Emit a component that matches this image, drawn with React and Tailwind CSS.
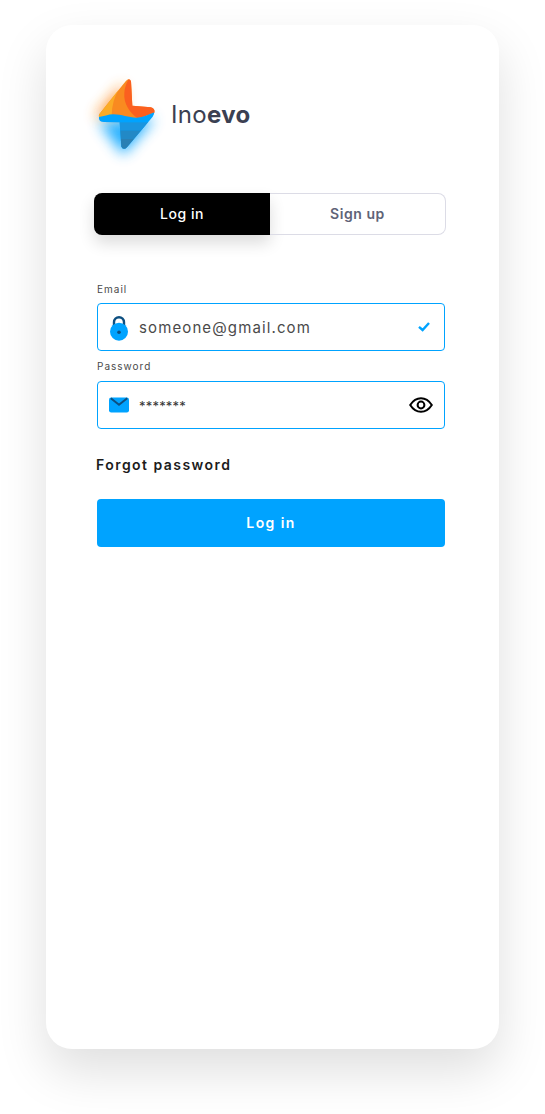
const font = { fontFamily: 'Inter, "Open Sans", sans-serif' };

function Logo() {
  const blue = "M57 171 C72 170 84 163 100 163 C125 163 145 173 170 173 C190 172 205 164 223 157 Q223 164 218 170 L141 262 Q131 272 124 260 L119 187 L72 186 Q55 185 57 171 Z";
  return (
    <svg width="90" height="110" viewBox="0 0 270 330" className="shrink-0 overflow-visible">
      <defs>
        <filter id="g1" x="-80%" y="-80%" width="260%" height="260%"><feGaussianBlur stdDeviation="20" /></filter>
        <clipPath id="c"><path d={blue} /></clipPath>
      </defs>
      <path d="M130 70 L42 170 L130 170 Z" fill="#ff8a1f" opacity="0.85" filter="url(#g1)" />
      <path d="M55 185 L130 285 L225 175 Z" fill="#00a3ff" opacity="0.85" filter="url(#g1)" />
      <path d="M137 64 Q147 52 153 64 L157 137 L212 142 Q226 146 223 158 L170 178 L100 168 L57 172 Q55 165 60 160 Z" fill="#f98a20" />
      <path d="M116 89 L60 160 Q55 165 57 172 L95 166 Q96 120 116 89 Z" fill="#fbab26" />
      <path d="M153 64 L157 137 L212 142 Q226 146 223 158 L190 170 L172 174 C150 160 130 130 133 100 Q134 78 146 58 Q151 58 153 64 Z" fill="#fb5f1f" />
      <g clipPath="url(#c)">
        <rect x="40" y="150" width="200" height="130" fill="#00a3ff" />
        <rect x="40" y="187" width="200" height="24" fill="#1a95df" />
        <rect x="40" y="211" width="200" height="26" fill="#2289c6" />
        <rect x="40" y="237" width="200" height="40" fill="#2a80b4" />
      </g>
    </svg>
  );
}

function Lock() {
  return (
    <svg width="21" height="32" viewBox="0 0 21 32" className="shrink-0">
      <path d="M5 16 V11.2 a5 5 0 0 1 10 0 V16" fill="none" stroke="#0d4f80" strokeWidth="2.4" />
      <circle cx="10" cy="20.7" r="9" fill="#00a3ff" />
      <circle cx="10" cy="21.3" r="1.8" fill="#0d4f80" />
    </svg>
  );
}

function Mail() {
  return (
    <svg width="21" height="16" viewBox="0 0 21 16" className="shrink-0">
      <rect x="0" y="0.5" width="20" height="15" rx="2.2" fill="#00a3ff" />
      <path d="M1.8 1.2 L10 7.8 L18.2 1.2" fill="none" stroke="#0d4f80" strokeWidth="2" />
    </svg>
  );
}

function Check() {
  return (
    <svg width="12" height="10" viewBox="0 0 12 10" className="shrink-0">
      <path d="M1 4.8 L4.6 8 L11 1" fill="none" stroke="#00a3ff" strokeWidth="2.4" />
    </svg>
  );
}

function Eye() {
  return (
    <svg width="24" height="16" viewBox="0 0 24 16" className="shrink-0">
      <path d="M1.2 8 C4 3.6 7.6 1.2 12 1.2 C16.4 1.2 20 3.6 22.8 8 C20 12.4 16.4 14.8 12 14.8 C7.6 14.8 4 12.4 1.2 8 Z" fill="none" stroke="#000" strokeWidth="2" />
      <circle cx="12" cy="8" r="3.4" fill="none" stroke="#000" strokeWidth="2" />
    </svg>
  );
}

function Label({ children, className }) {
  return <div className={`h-[14px] text-[10px] leading-[14px] tracking-[1px] text-[#4a4a4a] ${className}`}>{children}</div>;
}

function Field({ icon, right, children, pr, textClass }) {
  return (
    <div className={`flex h-12 items-center rounded-[4px] border border-[#00a3ff] pl-[11px] ${pr}`}>
      {icon}
      <span className={`ml-[9px] pt-[3px] ${textClass}`}>{children}</span>
      <span className="ml-auto flex">{right}</span>
    </div>
  );
}

export default function App() {
  return (
    <div className="h-[1114px] w-[545px] overflow-hidden bg-white pt-[25px] pl-[46px]" style={font}>
      <div className="h-[1024px] w-[453px] rounded-[26px] bg-white pt-[35px] pl-[48px] shadow-[0_22px_50px_rgba(0,0,0,0.13)]">
        <div className="-ml-[14px] flex h-[110px] items-center">
          <Logo />
          <span className="ml-px text-[24px] leading-none tracking-[0.35px] text-[#3b4052]">
            Ino<span className="font-bold">evo</span>
          </span>
        </div>

        <div className="mt-[23px] flex h-[42px] w-[352px]">
          <div className="flex w-[176px] items-center justify-center rounded-l-[8px] bg-black pb-[2px] text-[14px] font-medium text-white shadow-[0_8px_16px_rgba(0,0,0,0.14)]">
            <span className="tracking-[0.55px]">Log in</span>
          </div>
          <div className="flex flex-1 items-center justify-center rounded-r-[8px] border border-l-0 border-[#dcdce6] pb-[2px] text-[14px] font-semibold text-[#5f6377]">
            <span className="tracking-[0.55px]">Sign up</span>
          </div>
        </div>

        <div className="ml-[3px] mt-[47px] w-[348px]">
          <Label className="mb-[7px]">Email</Label>
          <Field icon={<Lock />} right={<Check />} pr="pr-[14px]" textClass="text-[15px] tracking-[1.12px] text-[#4a4a4a]">
            someone@gmail.com
          </Field>
          <Label className="mb-2 mt-2">Password</Label>
          <Field icon={<Mail />} right={<Eye />} pr="pr-[11px]" textClass="text-[13px] tracking-[0.2px] text-[#333]">
            *******
          </Field>
          <div className="-ml-px mt-[26px] h-5 text-[14px] font-semibold leading-5 tracking-[1.45px] text-[#1c1c1c]">Forgot password</div>
          <button className="mt-6 flex h-12 w-full items-center justify-center rounded-[4px] bg-[#00a3ff] pb-[2px] text-[14px] font-semibold tracking-[1.4px] text-white">
            Log in
          </button>
        </div>
      </div>
    </div>
  );
}
